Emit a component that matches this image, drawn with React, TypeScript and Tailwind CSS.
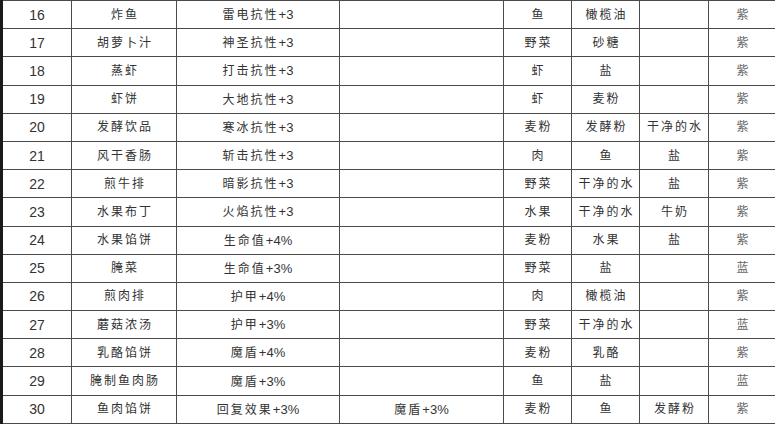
const rows: string[][] = [
    ['16', '炸鱼', '雷电抗性+3', '', '鱼', '橄榄油', '', '紫'],
    ['17', '胡萝卜汁', '神圣抗性+3', '', '野菜', '砂糖', '', '紫'],
    ['18', '蒸虾', '打击抗性+3', '', '虾', '盐', '', '紫'],
    ['19', '虾饼', '大地抗性+3', '', '虾', '麦粉', '', '紫'],
    ['20', '发酵饮品', '寒冰抗性+3', '', '麦粉', '发酵粉', '干净的水', '紫'],
    ['21', '风干香肠', '斩击抗性+3', '', '肉', '鱼', '盐', '紫'],
    ['22', '煎牛排', '暗影抗性+3', '', '野菜', '干净的水', '盐', '紫'],
    ['23', '水果布丁', '火焰抗性+3', '', '水果', '干净的水', '牛奶', '紫'],
    ['24', '水果馅饼', '生命值+4%', '', '麦粉', '水果', '盐', '紫'],
    ['25', '腌菜', '生命值+3%', '', '野菜', '盐', '', '蓝'],
    ['26', '煎肉排', '护甲+4%', '', '肉', '橄榄油', '', '紫'],
    ['27', '蘑菇浓汤', '护甲+3%', '', '野菜', '干净的水', '', '蓝'],
    ['28', '乳酪馅饼', '魔盾+4%', '', '麦粉', '乳酪', '', '紫'],
    ['29', '腌制鱼肉肠', '魔盾+3%', '', '鱼', '盐', '', '蓝'],
    ['30', '鱼肉馅饼', '回复效果+3%', '魔盾+3%', '麦粉', '鱼', '发酵粉', '紫'],
]

const widths = ['w-[70px]', 'w-[105px]', 'w-[163px]', 'w-[164px]', 'w-[68px]', 'w-[68px]', 'w-[69px]', 'w-[68px]']

// chinese part gets letter spacing, the "+3" / "+4%" tail does not
function Cell({ text }: { text: string })
{
    const at = text.indexOf('+')
    if (at < 0) return <span className="tracking-[2px] mr-[-2px]">{text}</span>
    return (
        <>
            <span className="tracking-[2px]">{text.slice(0, at)}</span>
            <span className="text-[13px]">{text.slice(at)}</span>
        </>
    )
}

export default function App()
{
    return (
        <div className="w-[775px] h-[427px] bg-white overflow-hidden" style={{ fontFamily: '"Liberation Sans", "Noto Sans CJK SC", sans-serif' }}>
            <table className="w-[775px] table-fixed border-collapse text-[#333]">
                <colgroup>
                    {widths.map((w, i) => <col key={i} className={w} />)}
                </colgroup>
                <tbody>
                    {rows.map((row) => (
                        <tr key={row[0]} className="h-[28.2px]">
                            {row.map((cell, i) => (
                                <td
                                    key={i}
                                    className={
                                        i === 0
                                            ? 'border border-[#4a4a4a] border-l-[3px] border-l-[#1a1a1a] text-center text-[14px] p-0 leading-none'
                                            : i === 7
                                                ? 'border border-[#4a4a4a] text-center text-[12px] p-0 leading-none text-[#666]'
                                                : 'border border-[#4a4a4a] text-center text-[12px] p-0 leading-none whitespace-nowrap'
                                    }
                                >
                                    {i === 0 ? cell : <Cell text={cell} />}
                                </td>
                            ))}
                        </tr>
                    ))}
                </tbody>
            </table>
        </div>
    )
}
